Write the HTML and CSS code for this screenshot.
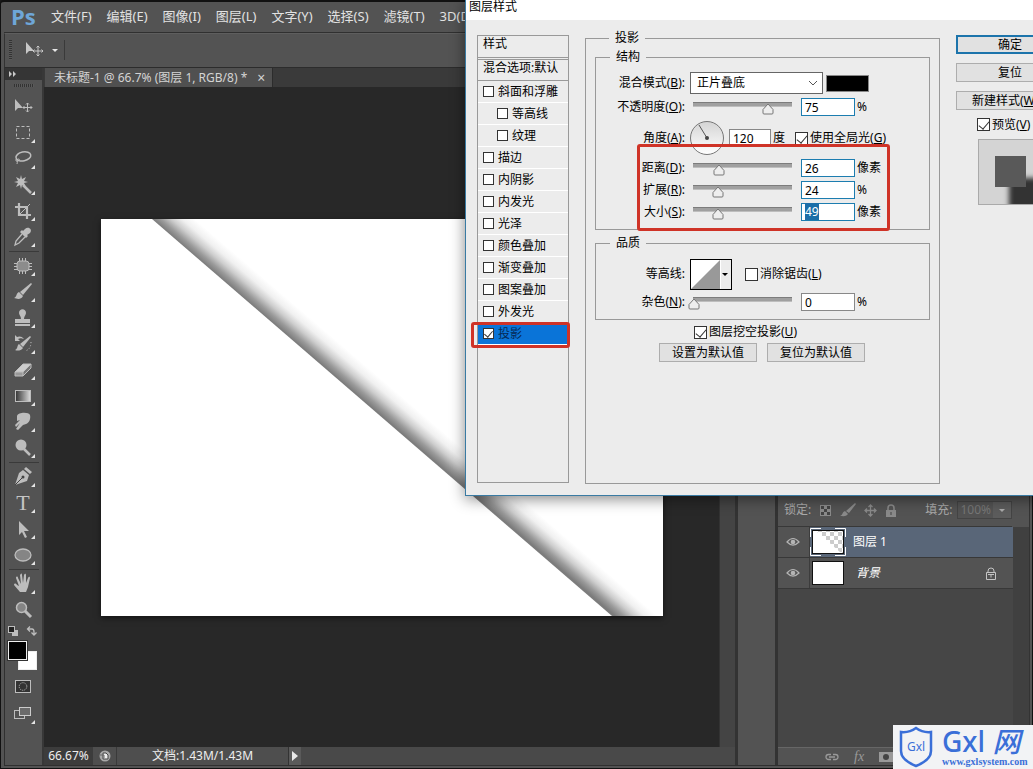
FILE: index.html
```html
<!DOCTYPE html>
<html lang="zh-CN">
<head>
<meta charset="utf-8">
<title>未标题-1</title>
<link rel="stylesheet" href="styles.css">
</head>
<body>
<div class="app">
  <nav class="menubar">
    <span class="brand">Ps</span>
    <button>文件(F)</button><button>编辑(E)</button><button>图像(I)</button><button>图层(L)</button><button>文字(Y)</button><button>选择(S)</button><button>滤镜(T)</button><button>3D(D)</button>
  </nav>
  <div class="optionsbar">
    <span class="vgrip"></span>
    <button class="preset" aria-label="移动工具">
      <svg width="34" height="20" viewBox="0 0 34 20"><path d="M1 2v12l3-3h5z" fill="#c8c8c8"/><path d="M13 6v10M8 11h10M11.500 7.500L13 6l1.500 1.500M11.500 14.500L13 16l1.500-1.500M9.500 9.500L8 11l1.500 1.500M16.500 9.500L18 11l-1.500 1.500" stroke="#c8c8c8" fill="none"/><path d="M27 9h6l-3 3z" fill="#e8e8e8"/></svg>
    </button>
  </div>
  <div class="workspace">
    <aside class="tools">
      <div class="tools-head"><svg width="8" height="6" viewBox="0 0 8 6"><path d="M0 0l3 3-3 3zM4 0l3 3-3 3z" fill="#c8c8c8"/></svg></div>
      <div class="hgrip"></div>
      <button class="tool plain" aria-label="移动"><svg viewBox="0 0 24 24"><path d="M4 4v12l3-3h5z" fill="#bdbdbd"/><path d="M16.500 8v9M12 12.500h9M15 9.500L16.500 8 18 9.500M15 15.500l1.500 1.500 1.500-1.500M13.500 11L12 12.500l1.500 1.500M19.500 11l1.500 1.500-1.500 1.500" class="ln"/></svg></button>
      <button class="tool" aria-label="矩形选框"><svg viewBox="0 0 24 24"><rect x="5.500" y="5.500" width="13" height="12" class="ln" stroke-dasharray="3 2"/></svg></button>
      <button class="tool" aria-label="套索"><svg viewBox="0 0 24 24"><ellipse cx="12.500" cy="9.500" rx="7.500" ry="4.500" class="ln" stroke-width="1.500" transform="rotate(-12 12 10)"/><path d="M6 11c-2 2-1 4 1 3s2-2 0-2c-2 1 0 3-1 5" class="ln"/></svg></button>
      <button class="tool" aria-label="魔棒"><svg viewBox="0 0 24 24"><path d="M12 12l8 8" stroke="#bdbdbd" stroke-width="2.500"/><path d="M10 2l1 4 4-2-2 4 4 1-4 1 2 4-4-2-1 4-1-4-4 2 2-4-4-1 4-1-2-4 4 2z" fill="#bdbdbd"/></svg></button>
      <button class="tool" aria-label="裁剪"><svg viewBox="0 0 24 24"><path d="M8 4v12h12M4 8h12v12" class="ln" stroke-width="2.200"/><path d="M9 15L19 5" class="ln"/></svg></button>
      <button class="tool" aria-label="吸管"><svg viewBox="0 0 24 24"><path d="M14 4c3-3 8 0 5 4l-3 2 1 1-2 2-6-6 2-2 1 1z" fill="#bdbdbd"/><path d="M11 9l-6 7-1 4 4-2 6-6" class="ln" stroke-width="1.300"/></svg></button>
      <hr>
      <button class="tool" aria-label="污点修复"><svg viewBox="0 0 24 24"><rect x="6" y="7" width="12" height="10" rx="3" fill="#8c8c8c" stroke="#bdbdbd"/><path d="M8.500 4v3M11.500 4v3M14.500 4v3M8.500 17v3M11.500 17v3M14.500 17v3M3 9.500h3M3 12.500h3M3 15.500h3M18 9.500h3M18 12.500h3M18 15.500h3" class="ln"/></svg></button>
      <button class="tool" aria-label="画笔"><svg viewBox="0 0 24 24"><path d="M20 3l1 1-9 11-3-3z" fill="#bdbdbd"/><path d="M8 12l4 4c-2 4-6 3-9 2 3-1 2-5 5-6z" fill="#bdbdbd"/></svg></button>
      <button class="tool" aria-label="仿制图章"><svg viewBox="0 0 24 24"><path d="M10 13c0-3-2-4-2-6 0-5 7-5 7 0 0 2-2 3-2 6h6v4H4v-4z" fill="#bdbdbd"/><path d="M4 19h15" stroke="#bdbdbd" stroke-width="2"/></svg></button>
      <button class="tool" aria-label="历史画笔"><svg viewBox="0 0 24 24"><path d="M19 4l1 1-8 10-3-3z" fill="#bdbdbd"/><path d="M8 12l4 4c-2 3-6 3-8 2 3-1 2-5 4-6zM4 3v6h5L7 7c2-1 3-1 6 0-2-3-5-3-7-2z" fill="#bdbdbd"/><path d="M20 10c0 5-2 8-6 9" class="ln" stroke-dasharray="1 2"/></svg></button>
      <button class="tool" aria-label="橡皮擦"><svg viewBox="0 0 24 24"><path d="M4 14l8-8h8l-8 8z" fill="#ccc"/><path d="M4 14h8v4H4z" fill="#999"/><path d="M12 14l8-8v4l-8 8z" fill="#777"/><path d="M4 14l8-8h8v4l-8 8H4zM4 14h8v4M12 14l8-8" class="ln"/></svg></button>
      <button class="tool" aria-label="渐变"><svg viewBox="0 0 24 24"><defs><linearGradient id="gt"><stop stop-color="#333"/><stop offset="1" stop-color="#ddd"/></linearGradient></defs><rect x="4.500" y="6.500" width="15" height="11" fill="url(#gt)" stroke="#bdbdbd"/></svg></button>
      <button class="tool" aria-label="涂抹"><svg viewBox="0 0 24 24"><path d="M6 6c1-4 12-4 13-1 1 4-1 8-4 9l-3 1-5 5-2-1 4-6-4 4-1-2 5-5-3 1z" fill="#bdbdbd"/></svg></button>
      <button class="tool" aria-label="减淡"><svg viewBox="0 0 24 24"><circle cx="10" cy="9" r="5.500" fill="#bdbdbd"/><path d="M13 13l6 6" stroke="#bdbdbd" stroke-width="2.500"/></svg></button>
      <hr>
      <button class="tool" aria-label="钢笔"><svg viewBox="0 0 24 24"><path d="M15 2l6 5-2 2-6-5zM12 5l6 5-2 6-12 4 4-12z" fill="#bdbdbd"/><path d="M4 20l7-7" stroke="#444"/><circle cx="12" cy="12" r="1.500" fill="#444"/></svg></button>
      <button class="tool type" aria-label="横排文字">T</button>
      <button class="tool" aria-label="路径选择"><svg viewBox="0 0 24 24"><path d="M8 4v14l3-3 3 6 2-1-3-6h5z" fill="#bdbdbd"/></svg></button>
      <button class="tool" aria-label="椭圆"><svg viewBox="0 0 24 24"><ellipse cx="12" cy="12" rx="8" ry="6" fill="#858585" stroke="#bdbdbd" stroke-width="1.300"/></svg></button>
      <hr>
      <button class="tool" aria-label="抓手"><svg viewBox="0 0 24 24"><path d="M9 20l-6-7c0-2 2-2 3 0l2 1-3-8c0-2 2-2 2 0l3 6-1-9c1-2 2-2 2 0l1 8 1-8c1-2 2-1 2 0v8l2-5c1-2 2-1 2 0l-2 9-2 5z" fill="#bdbdbd"/></svg></button>
      <button class="tool plain" aria-label="缩放"><svg viewBox="0 0 24 24"><circle cx="10.500" cy="9.500" r="5" fill="#858585" stroke="#bdbdbd" stroke-width="1.500"/><path d="M14 13l6 6" stroke="#bdbdbd" stroke-width="3"/></svg></button>
      <div class="mini">
        <svg width="10" height="10" viewBox="0 0 10 10"><rect x="4" y="4" width="6" height="6" fill="#bdbdbd"/><rect x=".5" y=".5" width="6" height="6" fill="#222" stroke="#bdbdbd"/></svg>
        <svg width="11" height="10" viewBox="0 0 11 10"><path d="M2 3h4q2 0 2 3v2M4 .5L1.500 3 4 5.500M5.500 6.500L8 9l2.500-2.500" class="ln" stroke-width="1.300"/></svg>
      </div>
      <div class="swatches"><span class="bg"></span><span class="fg"></span></div>
      <button class="tool plain mask" aria-label="快速蒙版"><svg viewBox="0 0 24 24"><rect x="4.500" y="5.500" width="15" height="12" fill="#333" stroke="#bdbdbd"/><circle cx="12" cy="11.500" r="3.800" class="ln" stroke-dasharray="1 1"/></svg></button>
      <button class="tool" aria-label="屏幕模式"><svg viewBox="0 0 24 24"><rect x="3.500" y="8.500" width="10" height="8" class="ln"/><rect x="8.500" y="5.500" width="11" height="8" fill="#6a6a6a" stroke="#ccc"/></svg></button>
    </aside>
    <main class="document">
      <div class="tabs"><div class="tab">未标题-1 @ 66.7% (图层 1, RGB/8) *<button class="close" aria-label="关闭">×</button></div></div>
      <div class="stage">
        <div class="stage-view">
        <svg class="artwork" width="562" height="397" viewBox="0 0 562 397">
          <defs><linearGradient id="sh" gradientUnits="userSpaceOnUse" x1="51" y1="0" x2="69" y2="-21"><stop stop-color="#7c7c7c"/><stop offset=".2" stop-color="#9a9a9a"/><stop offset=".45" stop-color="#cdcdcd"/><stop offset=".7" stop-color="#f0f0f0"/><stop offset="1" stop-color="#fff"/></linearGradient></defs>
          <rect width="562" height="397" fill="#fff"/><path d="M51 0H562V397H511z" fill="url(#sh)"/>
        </svg>
        </div>
        <div class="vscroll"></div>
      </div>
      <div class="status">
        <span class="zoomlevel">66.67%</span>
        <span class="export"><svg width="12" height="12" viewBox="0 0 12 12"><circle cx="6" cy="6" r="5.500" fill="#a8a8a8"/><path d="M4 3h3l2 2v4H4z" fill="#eee" stroke="#444"/><path d="M1 5h4v3" stroke="#666" fill="none"/></svg></span>
        <span class="docsize">文档:1.43M/1.43M</span>
        <button class="more" aria-label="状态选项"><svg width="8" height="10" viewBox="0 0 8 10"><path d="M1 0l6 5-6 5z" fill="#e8e8e8"/></svg></button>
      </div>
    </main>
    <div class="dock"></div>
    <aside class="layers">
      <div class="panel-top"></div>
      <div class="lockrow">
        <span>锁定:</span>
        <svg width="13" height="13" viewBox="0 0 13 13"><path d="M1 1h11v11H1z" fill="#8a8a8a"/><path d="M2 2h3v3H2zM8 2h3v3H8zM5 5h3v3H5zM2 8h3v3H2zM8 8h3v3H8z" fill="#444"/></svg>
        <svg width="16" height="14" viewBox="0 0 16 14"><path d="M15 0l1 1-7 9-3-2zM5 8l3 3c-2 3-5 2-8 2 3-1 2-4 5-5z" fill="#8a8a8a"/></svg>
        <svg width="13" height="13" viewBox="0 0 13 13"><path d="M6.500 1v11M1 6.500h11M4.500 3l2-2 2 2M4.500 10l2 2 2-2M3 4.500l-2 2 2 2M10 4.500l2 2-2 2" stroke="#8a8a8a" stroke-width="1.300" fill="none"/></svg>
        <svg width="12" height="13" viewBox="0 0 12 13"><path d="M3 6V4a3 3 0 016 0v2" stroke="#8a8a8a" stroke-width="1.500" fill="none"/><path d="M1 6h10v7H1z" fill="#8a8a8a"/><path d="M6 8v3" stroke="#444"/></svg>
        <span class="fill-label">填充:</span>
        <span class="fill"><span>100%</span><b></b></span>
      </div>
      <ul class="layerlist">
        <li class="active">
          <span class="eye"><svg width="14" height="10" viewBox="0 0 14 10"><path d="M1 5q6-7 12 0q-6 6-12 0z" fill="#555" stroke="#b4b4b4" stroke-width="1.200"/><circle cx="7" cy="5" r="2.300" fill="#b4b4b4"/></svg></span>
          <svg class="thumb" width="36" height="28" viewBox="0 0 36 28"><defs><pattern id="ck" width="8" height="8" patternUnits="userSpaceOnUse"><rect width="8" height="8" fill="#fff"/><path d="M0 0h4v4H0zM4 4h4v4H4z" fill="#ccc"/></pattern></defs><rect x="2.500" y="2.500" width="31" height="23" fill="url(#ck)" stroke="#111"/><path d="M3 3h3l25 22H3z" fill="#fff"/><path d="M.5 9V.5H11M25 .5h10.500V9M35.500 19v8.500H25M11 27.500H.5V19" stroke="#fff" fill="none"/></svg>
          <span class="lname">图层 1</span>
        </li>
        <li>
          <span class="eye"><svg width="14" height="10" viewBox="0 0 14 10"><path d="M1 5q6-7 12 0q-6 6-12 0z" fill="#555" stroke="#b4b4b4" stroke-width="1.200"/><circle cx="7" cy="5" r="2.300" fill="#b4b4b4"/></svg></span>
          <svg class="thumb" width="36" height="28" viewBox="0 0 36 28"><rect x="2.500" y="2.500" width="31" height="23" fill="#fff" stroke="#111"/></svg>
          <em class="lname">背景</em>
          <svg class="locked" width="12" height="13" viewBox="0 0 12 13"><path d="M3 5V4a3 3 0 016 0v1M1.500 5.500h9v7h-9zM6 7.500v3M3 7.500h6" stroke="#c4c4c4" fill="none"/></svg>
        </li>
      </ul>
      <div class="layerfoot">
        <svg width="14" height="8" viewBox="0 0 14 8"><path d="M6 1.500H3.500a2.500 2.500 0 000 5H6M8 1.500h2.500a2.500 2.500 0 010 5H8M4 4h6" stroke="#999" stroke-width="1.300" fill="none"/></svg>
        <i>fx</i>
        <svg width="14" height="10" viewBox="0 0 14 10"><path d="M0 0h14v10H0z" fill="#999"/><circle cx="7" cy="5" r="3" fill="#444"/></svg>
      </div>
    </aside>
  </div>
</div>

<section class="dialog">
  <header>图层样式</header>
  <form class="dlg-body">
    <div class="stylelist">
      <div class="hd">样式</div>
      <div class="hd second">混合选项:默认</div>
      <label><input type="checkbox">斜面和浮雕</label>
      <label class="sub"><input type="checkbox">等高线</label>
      <label class="sub"><input type="checkbox">纹理</label>
      <label><input type="checkbox">描边</label>
      <label><input type="checkbox">内阴影</label>
      <label><input type="checkbox">内发光</label>
      <label><input type="checkbox">光泽</label>
      <label><input type="checkbox">颜色叠加</label>
      <label><input type="checkbox">渐变叠加</label>
      <label><input type="checkbox">图案叠加</label>
      <label><input type="checkbox">外发光</label>
      <label class="on"><input type="checkbox" checked>投影</label>
    </div>
    <fieldset class="outer">
      <legend>投影</legend>
      <fieldset>
        <legend>结构</legend>
        <div class="row blend"><label class="lb" for="mode">混合模式(<u>B</u>):</label><select id="mode"><option>正片叠底</option></select><button type="button" class="color" aria-label="阴影颜色"></button></div>
        <div class="row"><label class="lb" for="op">不透明度(<u>O</u>):</label><input type="range" value="75" aria-label="不透明度"><input type="text" id="op" value="75"><span>%</span></div>
        <div class="row angle"><label class="lb" for="ang">角度(<u>A</u>):</label>
          <svg class="dial" width="36" height="36" viewBox="0 0 36 36"><defs><linearGradient id="dg" x2="0" y2="1"><stop stop-color="#d4d4d4"/><stop offset="1" stop-color="#fff"/></linearGradient></defs><circle cx="18" cy="18" r="16.500" fill="url(#dg)" stroke="#777"/><path d="M18 18L10 5" stroke="#555"/><circle cx="18" cy="18" r="2" fill="#444"/></svg>
          <input type="text" class="short" id="ang" value="120"><span>度</span><label class="ck"><input type="checkbox" checked><span>使用全局光(<u>G</u>)</span></label></div>
        <div class="row"><label class="lb" for="dist">距离(<u>D</u>):</label><input type="range" value="26" aria-label="距离"><input type="text" id="dist" value="26"><span>像素</span></div>
        <div class="row"><label class="lb" for="spread">扩展(<u>R</u>):</label><input type="range" value="24" aria-label="扩展"><input type="text" id="spread" value="24"><span>%</span></div>
        <div class="row"><span class="lb" id="size-label">大小(<u>S</u>):</span><input type="range" value="24" aria-label="大小"><span class="field" role="textbox" contenteditable="true" aria-labelledby="size-label"><mark>49</mark></span><span>像素</span></div>
      </fieldset>
      <fieldset class="quality">
        <legend>品质</legend>
        <div class="row contour"><span class="lb">等高线:</span>
          <button type="button" class="curve" aria-label="等高线"><svg width="42" height="31" viewBox="0 0 42 31"><rect x=".5" y=".5" width="41" height="30" fill="#fff" stroke="#000"/><path d="M1 30L30 1v29z" fill="#999"/><path d="M31 1h10v29H31z" fill="#ececec"/><path d="M32 14h6l-3 3z"/></svg></button>
          <label class="ck"><input type="checkbox"><span>消除锯齿(<u>L</u>)</span></label></div>
        <div class="row"><label class="lb" for="noise">杂色(<u>N</u>):</label><input type="range" value="0" aria-label="杂色"><input type="text" class="gray" id="noise" value="0"><span>%</span></div>
      </fieldset>
      <label class="ck knock"><input type="checkbox" checked><span>图层挖空投影(<u>U</u>)</span></label>
      <div class="defaults"><button type="button">设置为默认值</button><button type="button">复位为默认值</button></div>
    </fieldset>
    <div class="side">
      <button type="button" class="primary">确定</button>
      <button type="button">复位</button>
      <button type="button">新建样式(<u>W</u>)...</button>
      <label class="ck"><input type="checkbox" checked><span>预览(<u>V</u>)</span></label>
      <div class="preview"><span></span></div>
    </div>
  </form>
  <div class="callout settings"></div>
  <div class="callout effect"></div>
</section>

<div class="watermark">
  <svg width="34" height="42" viewBox="0 0 34 42"><path d="M17 2q7 5 15 4v19q0 9-15 15Q2 34 2 25V6q8 1 15-4z" fill="none" stroke="#3a6fd8" stroke-width="2.500"/></svg>
  <span class="wm-in">Gxl</span>
  <div class="wm-text"><strong>Gxl <em>网</em></strong><small>www.gxlsystem.com</small></div>
</div>
</body>
</html>
```
FILE: styles.css
```css
* { box-sizing: border-box; }
body {
  margin: 0; height: 100vh; overflow: hidden; position: relative; background: #1a1a1a;
  font: 12px/16px "Noto Sans", "Noto Sans CJK SC", sans-serif; color: #ddd;
}
button { font: inherit; color: inherit; border: 0; background: none; padding: 0; }
svg { display: block; flex: none; }
.ln { fill: none; stroke: #bdbdbd; }

.app {
  height: 100vh; display: flex; flex-direction: column; background: #535353;
  border: 1px solid #111; border-top-width: 2px; border-radius: 4px 4px 0 0; padding: 0 3px 2px;
}
.menubar { height: 31px; display: flex; align-items: center; gap: 15px; padding: 0 0 2px 7px; border-bottom: 1px solid #303030; font-size: 13px; white-space: nowrap; color: #e2e2e2; }
.brand { font: bold 22px/28px "Open Sans", sans-serif; color: #6ea6d8; width: 25px; }
.optionsbar { height: 35px; display: flex; align-items: center; border-bottom: 1px solid #2c2c2c; border-left: 1px solid #333; padding: 0 0 2px 4px; border-top: 1px solid #5e5e5e; }
.vgrip { width: 3px; height: 20px; background: repeating-linear-gradient(#333 0 1px, #5a5a5a 1px 2px); }
.preset { padding: 0 5px 0 13px; border-right: 1px solid #3a3a3a; }
.workspace { flex: 1; display: flex; min-height: 0; border-left: 1px solid #303030; border-bottom: 1px solid #303030; }

.tools { width: 39px; flex: none; border-right: 2px solid #383838; display: flex; flex-direction: column; }
.tools-head { height: 12px; background: #353535; padding: 3px 4px; flex: none; }
.hgrip { width: 20px; height: 3px; margin: 4px auto 7px 9px; background: repeating-linear-gradient(90deg, #333 0 1px, #5a5a5a 1px 2px); }
.tool { position: relative; height: 26px; flex: none; display: flex; justify-content: center; align-items: center; padding-right: 1px; }
.tool svg { width: 24px; height: 24px; }
.tool::after { content: ""; position: absolute; right: 7px; bottom: 3px; border: 2px solid transparent; border-right-color: #e4e4e4; border-bottom-color: #e4e4e4; }
.tool.plain::after { display: none; }
.tool.type { font: 22px/26px "Liberation Serif", serif; color: #c4c4c4; }
.tools hr { width: 30px; margin: 1px auto; border: 0; border-top: 1px solid #3a3a3a; flex: none; }
.mini { display: flex; justify-content: space-between; padding: 3px 5px 3px 3px; }
.swatches { display: grid; grid-template: 19px / 19px; height: 31px; padding: 0 3px; margin: 2px 0; }
.swatches span { grid-area: 1 / 1; width: 19px; height: 19px; border: 1px solid #eee; }
.fg { background: #000; outline: 1px solid #333; }
.bg { background: #fff; margin: 10px 0 0 10px; }
.mask { margin-bottom: 1px; }

.document { flex: 1; min-width: 0; display: flex; flex-direction: column; background: #282828; }
.tabs { height: 19px; background: #3a3a3a; flex: none; display: flex; padding-left: 1px; }
.tab { background: #505050; padding: 0 5px 0 9px; display: flex; align-items: center; gap: 8px; border-right: 1px solid #2c2c2c; white-space: nowrap; color: #d4d4d4; font-size: 12px; }
.close { width: 12px; font-size: 14px; }
.stage { flex: 1; display: flex; min-height: 0; }
.stage-view { flex: 1; display: flex; justify-content: center; align-items: center; min-width: 0; overflow: hidden; }
.artwork { box-shadow: 0 2px 6px #0008; }
.vscroll { width: 16px; background: #444; border-left: 1px solid #333; }
.status { height: 18px; flex: none; display: flex; align-items: center; background: #494949; font-size: 12px; color: #eee; }
.status > * { height: 100%; display: flex; align-items: center; justify-content: center; }
.zoomlevel { width: 49px; background: #3c3c3c; }
.export { width: 24px; background: #4e4e4e; border-right: 1px solid #3a3a3a; }
.docsize { width: 171px; background: #4e4e4e; }
.more { width: 13px; background: #5a5a5a; border-left: 1px solid #333; }

.dock { width: 43px; flex: none; border: solid #333; border-width: 0 3px; }
.layers { width: 252px; flex: none; display: flex; flex-direction: column; border-right: 1px solid #333; margin-right: -1px; }
.panel-top { height: 430px; flex: none; }
.lockrow { height: 29px; flex: none; display: flex; align-items: center; gap: 8px; padding: 0 0 4px 6px; color: #aaa; border-bottom: 1px solid #383838; margin-right: 17px; white-space: nowrap; }
.lockrow .fill-label { margin-left: auto; margin-right: -3px; }
.fill { display: flex; height: 18px; border: 1px solid #444; color: #777; align-items: center; }
.fill span { padding: 0 2px; }
.fill b { width: 18px; height: 16px; background: #5c5c5c; display: flex; align-items: center; justify-content: center; }
.fill b::after { content: ""; border: 3px solid transparent; border-top-color: #aaa; border-bottom: 0; }
.layerlist { flex: 1; margin: 0; padding: 0; list-style: none; background: linear-gradient(90deg, #464646 235px, #404040 235px); }
.layerlist li { width: 235px; height: 31px; display: flex; align-items: center; background: #535353; border-bottom: 1px solid #383838; color: #fff; }
.eye { width: 32px; height: 100%; display: flex; align-items: center; justify-content: center; background: #535353; border-right: 1px solid #3c3c3c; padding-right: 2px; }
.layerlist .active { background: #596678; }
.lname { margin-left: 7px; }
em.lname { margin-left: 10px; }
.locked { margin-left: auto; margin-right: 16px; }
.layerfoot { height: 18px; flex: none; display: flex; align-items: center; gap: 15px; padding-left: 47px; border-top: 1px solid #666; color: #999; }
.layerfoot i { font: italic 14px/16px "Liberation Serif", serif; }

.dialog {
  position: absolute; left: 465px; top: 0; width: 612px; background: #ececec; color: #000;
  border: 1px solid #3a7ba3; border-top: 0; box-shadow: 0 3px 14px #0007;
}
.dialog header { height: 20px; padding-left: 3px; background: #fff; line-height: 14px; }
.dlg-body { display: flex; gap: 16px; padding: 9px 12px 11px 11px; height: 475px; }
.stylelist { width: 92px; margin: 6px 0 1px; border: 1px solid #999; flex: none; }
.stylelist > * { height: 22px; display: flex; align-items: center; gap: 4px; border-bottom: 1px solid #fff; padding-left: 5px; white-space: nowrap; }
.stylelist .hd { border-color: #999; margin-bottom: 1px; padding-bottom: 5px; }
.stylelist .second { border-top: 1px solid #999; margin-bottom: 0; }
.stylelist .sub { padding-left: 19px; }
.stylelist .on { background: #0a74d8; color: #062a55; }
input[type="checkbox"] { appearance: none; width: 13px; height: 13px; margin: 0; border: 1px solid #333; background: #fff; flex: none; display: flex; justify-content: center; }
.stylelist input[type="checkbox"] { width: 11px; height: 11px; }
input[type="checkbox"]:checked::after { content: ""; width: 5px; height: 9px; border: solid #333; border-width: 0 1px 1px 0; transform: rotate(40deg); }
.stylelist input[type="checkbox"]:checked::after { width: 4px; height: 7px; }

fieldset { margin: 0; padding: 5px 0 6px; border: 1px solid #999; min-width: 0; }
legend { height: 18px; line-height: 18px; margin-left: 14px; padding: 0 6px; }
.outer { width: 355px; flex: none; padding: 1px 9px 0; }
.quality { margin-top: 4px; padding-top: 6px; }
.row { height: 22px; display: flex; align-items: center; white-space: nowrap; }
.lb { width: 89px; text-align: right; flex: none; }
.blend { height: 24px; gap: 5px; margin-bottom: 1px; }
.blend .color { margin-left: -2px; }
select { appearance: none; width: 133px; height: 22px; padding: 0 6px; border: 1px solid #666; border-radius: 0; color: #000; font: inherit;
  background: #fff url("data:image/svg+xml,%3Csvg xmlns='http://www.w3.org/2000/svg' width='10' height='6'%3E%3Cpath d='M1 1l4 4 4-4' fill='none' stroke='%23555'/%3E%3C/svg%3E") no-repeat right 4px center; }
.color { width: 43px; height: 17px; background: #000; border: 1px solid #888; }
input[type="text"], .field { width: 54px; height: 18px; margin: 0 2px 0 3px; padding: 0 3px; border: 1px solid #1c7db0; background: #fff; font: inherit; color: #000; }
input.gray, input.short { border-color: #888; }
input.short { width: 42px; }
mark { background: #1c6ea8; color: #fff; }
input[type="range"] { appearance: none; width: 110px; height: 14px; margin: 0 0 0 3px; flex: none;
  background: linear-gradient(#7c7c7c 0 1px, #a0a0a0 1px 4px, #bebebe 4px) no-repeat 5px 2px / 99px 5px; }
input[type="range"]::-webkit-slider-thumb { appearance: none; width: 12px; height: 12px; margin-top: 3px;
  background: url("data:image/svg+xml,%3Csvg xmlns='http://www.w3.org/2000/svg' width='12' height='12'%3E%3Cpath d='M6 1L1 6.500v3.500q0 1 1 1h8q1 0 1-1V6.500z' fill='%23eee' stroke='%23777'/%3E%3C/svg%3E"); }
.angle { height: 36px; margin: 2px 0 1px; }
.dial { margin: 0 1px 0 4px; }
.ck { display: flex; align-items: center; gap: 2px; white-space: nowrap; }
.angle .ck { margin-left: 10px; }
.contour { height: 32px; margin-bottom: 1px; }
.curve { margin: 0 13px 0 5px; }
.knock { margin: 3px 0 0 99px; height: 18px; }
.defaults { display: flex; gap: 10px; margin: 2px 0 0 64px; }
.defaults button { width: 98px; }
.defaults button, .side button { height: 19px; line-height: 17px; background: #e1e1e1; border: 1px solid #adadad; white-space: nowrap; }
.side { width: 108px; margin-top: 6px; display: flex; flex-direction: column; gap: 9px; flex: none; }
.side .primary { border: 2px solid #1c74ab; line-height: 15px; }
.side .ck { margin: -1px 0 -1px 21px; height: 13px; }
.preview { width: 66px; height: 66px; margin-left: 22px; background: #d4d4d4; border: 1px solid #aaa; padding: 16px; overflow: hidden; }
.preview span { display: block; width: 31px; height: 31px; background: #595959; box-shadow: 14px 22px 5px #333; }

.callout { position: absolute; border: 3px solid #cf3327; border-radius: 3px; pointer-events: none; }
.settings { left: 171px; top: 144px; width: 253px; height: 87px; }
.effect { left: 5px; top: 322px; width: 99px; height: 26px; }

.watermark { position: absolute; right: 0; bottom: 0; width: 140px; height: 44px; background: #f2f3f5; display: flex; align-items: center; padding-left: 6px; color: #3a6fd8; }
.wm-in { width: 34px; margin-left: -34px; text-align: center; }
.wm-text { display: flex; flex-direction: column; padding-left: 9px; white-space: nowrap; }
.wm-text strong { font-size: 28px; line-height: 30px; font-weight: 500; }
.wm-text small { font: bold 10px/12px "Liberation Serif", serif; }
```
